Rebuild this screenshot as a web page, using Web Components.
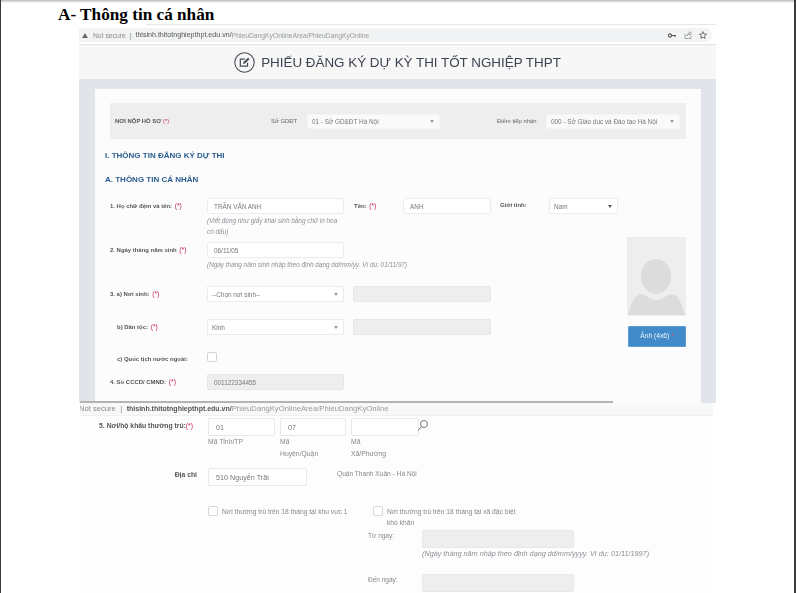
<!DOCTYPE html>
<html lang="vi">
<head>
<meta charset="utf-8">
<title>Thông tin cá nhân</title>
<style>
  html, body { margin: 0; padding: 0; background: #fff; }
</style>
</head>
<body>
<doc-page>
  <doc-title>A- Thông tin cá nhân</doc-title>

  <shot-one>
    <browser-bar></browser-bar>
    <form-header>PHIẾU ĐĂNG KÝ DỰ KỲ THI TỐT NGHIỆP THPT</form-header>
    <form-card>
      <submit-band></submit-band>
      <section-title style="margin-top:12px">I. THÔNG TIN ĐĂNG KÝ DỰ THI</section-title>
      <section-title style="margin-top:14px">A. THÔNG TIN CÁ NHÂN</section-title>

      <form-row label="1. Họ chữ đệm và tên:" required style="margin-top:13px;height:44px">
        <div>
          <text-box value="TRẦN VĂN ANH" width="137"></text-box>
          <hint-text style="width:135px">(Viết đúng như giấy khai sinh bằng chữ in hoa có dấu)</hint-text>
        </div>
        <field-label text="Tên:" required style="width:49px;margin-left:10px"></field-label>
        <text-box value="ANH" width="88"></text-box>
        <field-label text="Giới tính:" style="width:49px;margin-left:9px"></field-label>
        <select-box value="Nam" width="69" dark></select-box>
      </form-row>

      <personal-block>
        <form-row label="2. Ngày tháng năm sinh" required style="height:44px">
          <div>
            <text-box value="06/11/05" width="137"></text-box>
            <hint-text style="white-space:nowrap">(Ngày tháng năm sinh nhập theo định dạng dd/mm/yy. Ví dụ: 01/11/97)</hint-text>
          </div>
        </form-row>
        <form-row label="3. a) Nơi sinh:" required style="height:33px">
          <select-box value="--Chọn nơi sinh--" width="137"></select-box>
          <text-box width="138" disabled style="margin-left:9px"></text-box>
        </form-row>
        <form-row label="b) Dân tộc:" required indent style="height:33px">
          <select-box value="Kinh" width="137"></select-box>
          <text-box width="138" disabled style="margin-left:9px"></text-box>
        </form-row>
        <form-row label="c) Quốc tịch nước ngoài:" indent style="height:22px">
          <check-box></check-box>
        </form-row>
        <form-row label="4. Số CCCD/ CMND:" required>
          <text-box value="001122334455" width="137" disabled></text-box>
        </form-row>
        <photo-box slot="aside"></photo-box>
      </personal-block>
    </form-card>
  </shot-one>

  <shot-two>
    <browser-bar plain></browser-bar>
    <address-form></address-form>
  </shot-two>
</doc-page>

<script>
// Trang tài liệu gồm tiêu đề và hai ảnh chụp màn hình
class DocPage extends HTMLElement {
    constructor() {
        super();
        this.attachShadow({mode: 'open'});
    }
    connectedCallback() {
        this.shadowRoot.innerHTML = `
            <style>
                :host {
                    display: block;
                    position: relative;
                    width: 796px;
                    height: 593px;
                    overflow: hidden;
                    background: #fff;
                    box-sizing: border-box;
                    font-family: "Liberation Sans", Arial, sans-serif;
                }
                .shade {
                    position: absolute;
                    left: 0;
                    right: 0;
                    top: 0;
                    height: 3px;
                    background: linear-gradient(#b9b9b9, #fff);
                }
                .edge-l, .edge-r {
                    position: absolute;
                    top: 0;
                    bottom: 0;
                    background: #3a3a3a;
                }
                .edge-l { left: 0; width: 1px; }
                .edge-r { right: 0; width: 2px; }
            </style>
            <slot></slot>
            <div class="shade"></div>
            <div class="edge-l"></div>
            <div class="edge-r"></div>
        `;
    }
}
customElements.define('doc-page', DocPage);

class DocTitle extends HTMLElement {
    constructor() {
        super();
        this.attachShadow({mode: 'open'});
    }
    connectedCallback() {
        this.shadowRoot.innerHTML = `
            <style>
                :host {
                    display: block;
                    height: 24px;
                    padding-left: 58px;
                    box-sizing: border-box;
                    font: bold 17.2px/30px "Liberation Serif", "Times New Roman", serif;
                    color: #000;
                }
            </style>
            <slot></slot>
        `;
    }
}
customElements.define('doc-title', DocTitle);

class ShotOne extends HTMLElement {
    constructor() {
        super();
        this.attachShadow({mode: 'open'});
    }
    connectedCallback() {
        this.shadowRoot.innerHTML = `
            <style>
                :host {
                    display: block;
                    position: relative;
                    width: 637px;
                    height: 379px;
                    margin-left: 79px;
                    overflow: hidden;
                    background: #e1e5e9;
                    filter: blur(.4px);
                }
                /* thanh cuộn của ảnh chụp nằm đè lên phần đáy */
                .rule {
                    position: absolute;
                    left: 1px;
                    bottom: 0;
                    width: 533px;
                    height: 2px;
                    background: #b4b4b4;
                }
            </style>
            <slot></slot>
            <div class="rule"></div>
        `;
    }
}
customElements.define('shot-one', ShotOne);

class ShotTwo extends HTMLElement {
    constructor() {
        super();
        this.attachShadow({mode: 'open'});
    }
    connectedCallback() {
        this.shadowRoot.innerHTML = `
            <style>
                :host {
                    display: block;
                    width: 633px;
                    height: 190px;
                    margin-left: 80px;
                    overflow: hidden;
                    background: #fdfdfd;
                    filter: blur(.45px);
                }
            </style>
            <slot></slot>
        `;
    }
}
customElements.define('shot-two', ShotTwo);

class BrowserBar extends HTMLElement {
    constructor() {
        super();
        this.attachShadow({mode: 'open'});
    }
    connectedCallback() {
        const plain = this.hasAttribute('plain');
        const start = plain
            ? `<span class="grey cut">Not secure</span><span class="sep">|</span>`
            : `<svg width="6" height="5" viewBox="0 0 8 7"><path d="M4 0 8 7H0z" fill="#666"/></svg>
               <span class="grey" style="margin-left:2px">Not secure</span><span class="sep">|</span>`;
        const tools = plain ? '' : `
            <span class="tools">
                <svg width="8" height="5" viewBox="0 0 8 5"><circle cx="2" cy="2.5" r="1.6" fill="none" stroke="#555" stroke-width="1.1"/><path d="M3.5 2.5H8M6.8 2.5v1.6" stroke="#555"/></svg>
                <svg width="8" height="8" viewBox="0 0 8 8" fill="none" stroke="#888" stroke-width=".7"><path d="M1 3v4.500h6V5M3 5c0-2 1.500-3 3-3V.7L7.800 2.500 6 4.200V3C4.500 3 3.500 3.800 3 5z"/></svg>
                <svg width="8" height="8" viewBox="0 0 8 8"><path d="M4 .6 5 3l2.600.2-2 1.700.6 2.500L4 6.100 1.800 7.400l.6-2.500-2-1.700L3 3z" fill="none" stroke="#555" stroke-width=".8"/></svg>
            </span>`;
        this.shadowRoot.innerHTML = `
            <style>
                :host {
                    display: block;
                    box-sizing: border-box;
                    background: ${plain ? '#f7f8f8' : '#fff'};
                    height: ${plain ? '13px' : '21px'};
                    ${plain ? 'border-bottom: 1px solid #f0f0f0;' : 'border-bottom: 1px solid #e4e4e4;'}
                }
                .top {
                    height: 1px;
                    margin: 0 0 3px 67px;
                    background: #e3e7ea;
                }
                .line {
                    display: flex;
                    align-items: center;
                    gap: 3px;
                    height: ${plain ? '10px' : '14px'};
                    padding-left: ${plain ? '0' : '3px'};
                    padding-right: ${plain ? '0' : '5px'};
                    margin-right: ${plain ? '0' : '4px'};
                    border-radius: 0 7px 7px 0;
                    background: ${plain ? 'transparent' : '#f1f3f4'};
                    font-size: ${plain ? '7.6px' : '6.75px'};
                    white-space: nowrap;
                }
                .grey { color: #8a8a8a; }
                .cut { margin-left: -1px; }
                .sep { color: #888; margin: 0 ${plain ? '1.5px' : '1px'}; }
                .host { color: #555; font-weight: ${plain ? '700' : '400'}; font-size: ${plain ? '7px' : '7.1px'}; }
                .path { color: #9a9a9a; margin-left: -3px; font-size: ${plain ? '7.7px' : '6.75px'}; }
                .tools { margin-left: auto; display: flex; gap: 7.500px; align-items: center; }
            </style>
            ${plain ? '' : '<div class="top"></div>'}
            <div class="line">
                ${start}
                <span class="host">thisinh.thitotnghiepthpt.edu.vn/</span><span class="path">PhieuDangKyOnlineArea/PhieuDangKyOnline</span>
                ${tools}
            </div>
        `;
    }
}
customElements.define('browser-bar', BrowserBar);

class FormHeader extends HTMLElement {
    constructor() {
        super();
        this.attachShadow({mode: 'open'});
    }
    connectedCallback() {
        this.shadowRoot.innerHTML = `
            <style>
                :host {
                    display: flex;
                    align-items: center;
                    justify-content: center;
                    gap: 6px;
                    height: 34px;
                    background: #f7f7f8;
                    color: #3c4450;
                    font-size: 13.4px;
                    white-space: nowrap;
                }
            </style>
            <svg width="21" height="21" viewBox="0 0 21 21" fill="none" stroke="#474d55">
                <circle cx="10.500" cy="10.500" r="9.700" stroke-width="1.100"/>
                <path d="M13.500 10.800v3.400H6.300V7.200h4.600" stroke-width="1.200"/>
                <path d="M9 12l.5-2 4.500-4.200 1.500 1.500L11 11.500z" fill="#474d55" stroke="none"/>
            </svg>
            <slot></slot>
        `;
    }
}
customElements.define('form-header', FormHeader);

class FormCard extends HTMLElement {
    constructor() {
        super();
        this.attachShadow({mode: 'open'});
    }
    connectedCallback() {
        this.shadowRoot.innerHTML = `
            <style>
                :host {
                    display: block;
                    margin: 10px 15px 0 16px;
                    padding: 14px 15px 20px 15px;
                    background: #fcfcfc;
                    height: 330px;
                    box-sizing: border-box;
                }
            </style>
            <slot></slot>
        `;
    }
}
customElements.define('form-card', FormCard);

class SubmitBand extends HTMLElement {
    constructor() {
        super();
        this.attachShadow({mode: 'open'});
    }
    connectedCallback() {
        this.shadowRoot.innerHTML = `
            <style>
                :host {
                    display: grid;
                    grid-template-columns: 156px 36px 133px 57px 49px 134px;
                    align-items: center;
                    height: 36px;
                    padding-left: 5px;
                    background: #eeeeee;
                    font-size: 5.900px;
                    color: #666;
                }
                b { color: #555; font-weight: 700; }
                i { color: #c7254e; font-style: normal; }
                span { margin-top: -1px; }
                select-box { margin-top: 1px; }
            </style>
            <span><b>NƠI NỘP HỒ SƠ</b> <i>(*)</i></span>
            <span>Sở GDĐT</span>
            <select-box value="01 - Sở GD&amp;ĐT Hà Nội" width="133" soft></select-box>
            <span></span>
            <span>Điểm tiếp nhận</span>
            <select-box value="000 - Sở Giáo dục và Đào tạo Hà Nội" width="134" soft></select-box>
        `;
    }
}
customElements.define('submit-band', SubmitBand);

class SectionTitle extends HTMLElement {
    constructor() {
        super();
        this.attachShadow({mode: 'open'});
    }
    connectedCallback() {
        this.shadowRoot.innerHTML = `
            <style>
                :host {
                    display: block;
                    margin-left: -5px;
                    font-size: 8px;
                    line-height: 10px;
                    font-weight: 700;
                    color: #2a5d8f;
                }
            </style>
            <slot></slot>
        `;
    }
}
customElements.define('section-title', SectionTitle);

class FieldLabel extends HTMLElement {
    constructor() {
        super();
        this.attachShadow({mode: 'open'});
    }
    connectedCallback() {
        const text = this.getAttribute('text');
        const req = this.hasAttribute('required') ? ' <i>(*)</i>' : '';
        this.shadowRoot.innerHTML = `
            <style>
                :host {
                    display: block;
                    flex: none;
                    box-sizing: border-box;
                    padding-top: 3px;
                    font-size: 5.950px;
                    line-height: 9px;
                    font-weight: 700;
                    color: #555;
                    white-space: nowrap;
                }
                i { font-style: normal; font-weight: 400; font-size: 6.800px; margin-left: 1px; color: #c7254e; }
            </style>
            ${text}${req}
        `;
    }
}
customElements.define('field-label', FieldLabel);

class FormRow extends HTMLElement {
    constructor() {
        super();
        this.attachShadow({mode: 'open'});
    }
    connectedCallback() {
        const indent = this.hasAttribute('indent');
        const req = this.hasAttribute('required') ? 'required' : '';
        this.shadowRoot.innerHTML = `
            <style>
                :host {
                    display: flex;
                    align-items: flex-start;
                    box-sizing: border-box;
                }
                field-label {
                    width: 97px;
                    padding-left: ${indent ? '7px' : '0'};
                    box-sizing: border-box;
                }
            </style>
            <field-label text="${this.getAttribute('label')}" ${req}></field-label>
            <slot></slot>
        `;
    }
}
customElements.define('form-row', FormRow);

class TextBox extends HTMLElement {
    constructor() {
        super();
        this.attachShadow({mode: 'open'});
    }
    connectedCallback() {
        const width = this.getAttribute('width') || 137;
        const value = this.getAttribute('value') || '';
        const disabled = this.hasAttribute('disabled');
        this.shadowRoot.innerHTML = `
            <style>
                :host {
                    display: block;
                    flex: none;
                    box-sizing: border-box;
                    width: ${width}px;
                    height: 16px;
                    padding-left: 6px;
                    font-size: 6.400px;
                    line-height: 15px;
                    color: #777;
                    background: ${disabled ? '#eeeeee' : '#fff'};
                    border: 1px solid ${disabled ? '#e6e6e6' : '#ececec'};
                    border-radius: 2px;
                    white-space: nowrap;
                }
            </style>
            ${value}
        `;
    }
}
customElements.define('text-box', TextBox);

class SelectBox extends HTMLElement {
    constructor() {
        super();
        this.attachShadow({mode: 'open'});
    }
    connectedCallback() {
        const width = this.getAttribute('width') || 137;
        const dark = this.hasAttribute('dark');
        const soft = this.hasAttribute('soft');
        this.shadowRoot.innerHTML = `
            <style>
                :host {
                    display: flex;
                    align-items: center;
                    justify-content: space-between;
                    flex: none;
                    box-sizing: border-box;
                    width: ${width}px;
                    height: ${soft ? '15px' : '16px'};
                    padding: 0 5px 0 4px;
                    font-size: 6.400px;
                    color: #777;
                    font-weight: 400;
                    background: ${soft ? '#fafafa' : '#fff'};
                    border: 1px solid ${soft ? '#f4f4f4' : '#ececec'};
                    border-radius: 1px;
                    white-space: nowrap;
                }
                .arrow {
                    width: 0;
                    height: 0;
                    border-left: 2.500px solid transparent;
                    border-right: 2.500px solid transparent;
                    border-top: 3px solid ${dark ? '#555' : '#999'};
                }
            </style>
            <span>${this.getAttribute('value')}</span>
            <span class="arrow"></span>
        `;
    }
}
customElements.define('select-box', SelectBox);

class HintText extends HTMLElement {
    constructor() {
        super();
        this.attachShadow({mode: 'open'});
    }
    connectedCallback() {
        this.shadowRoot.innerHTML = `
            <style>
                :host {
                    display: block;
                    margin-top: 1px;
                    font-size: 6.400px;
                    line-height: 11px;
                    font-style: italic;
                    color: #8a8f96;
                }
            </style>
            <slot></slot>
        `;
    }
}
customElements.define('hint-text', HintText);

class CheckBox extends HTMLElement {
    constructor() {
        super();
        this.attachShadow({mode: 'open'});
    }
    connectedCallback() {
        this.shadowRoot.innerHTML = `
            <style>
                :host {
                    display: block;
                    flex: none;
                    box-sizing: border-box;
                    width: 10px;
                    height: 10px;
                    background: #fff;
                    border: 1px solid #d4d4d4;
                    border-radius: 2px;
                }
            </style>
        `;
    }
}
customElements.define('check-box', CheckBox);

// Khối có ảnh 4x6 nằm bên phải các dòng
class PersonalBlock extends HTMLElement {
    constructor() {
        super();
        this.attachShadow({mode: 'open'});
    }
    connectedCallback() {
        this.shadowRoot.innerHTML = `
            <style>
                :host {
                    display: flex;
                    justify-content: space-between;
                }
                .rows { flex: 1; }
                .side { flex: none; margin-top: -5px; }
            </style>
            <div class="rows"><slot></slot></div>
            <div class="side"><slot name="aside"></slot></div>
        `;
    }
}
customElements.define('personal-block', PersonalBlock);

class PhotoBox extends HTMLElement {
    constructor() {
        super();
        this.attachShadow({mode: 'open'});
    }
    connectedCallback() {
        this.shadowRoot.innerHTML = `
            <style>
                :host { display: block; width: 59px; }
                svg { display: block; }
                .btn {
                    margin: 10px 0 0 1px;
                    height: 21px;
                    box-sizing: border-box;
                    background: #428bca;
                    border: 1px solid #5a9bd4;
                    border-radius: 1px;
                    color: #eef5fb;
                    font-size: 6.700px;
                    line-height: 18px;
                    text-align: center;
                }
                i { font-style: normal; color: #d9534f; }
            </style>
            <svg width="59" height="79" viewBox="0 0 59 79">
                <rect width="59" height="79" fill="#eeeeee"/>
                <ellipse cx="29" cy="39.500" rx="15" ry="17.500" fill="#dcdcdc"/>
                <path d="M1 78C3 68 7 58 14 57c5 0 8 6 15 6S40 57 45 57c7 1 10 11 13 21z" fill="#dcdcdc"/>
            </svg>
            <div class="btn">Ảnh (4x6) <i>*</i></div>
        `;
    }
}
customElements.define('photo-box', PhotoBox);

// Phần dưới: nơi hộ khẩu thường trú
class AddressForm extends HTMLElement {
    constructor() {
        super();
        this.attachShadow({mode: 'open'});
    }
    connectedCallback() {
        this.shadowRoot.innerHTML = `
            <style>
                :host {
                    display: block;
                    padding-top: 2px;
                    font-size: 6.800px;
                    line-height: 12px;
                    color: #888;
                }
                .row { display: flex; align-items: flex-start; }
                .lbl {
                    flex: none;
                    width: 128px;
                    box-sizing: border-box;
                    font-weight: 700;
                    color: #555;
                    text-align: right;
                    padding-right: 14px;
                }
                .lbl i { font-style: normal; font-weight: 400; color: #c7254e; }
                .box {
                    box-sizing: border-box;
                    height: 18px;
                    background: #fff;
                    border: 1px solid #e8e8e8;
                    border-radius: 2px;
                    padding-left: 7px;
                    font-size: 7.200px;
                    line-height: 17px;
                    color: #777;
                    flex: none;
                }
                .off { background: #eeeeee; border-color: #e8e8e8; width: 152px; }
                .col { flex: none; }
                .cap { width: 60px; }
                .tick {
                    flex: none;
                    box-sizing: border-box;
                    width: 10px;
                    height: 10px;
                    background: #fff;
                    border: 1px solid #d8d8d8;
                    border-radius: 2px;
                    margin-right: 4px;
                }
                .note { font-size: 6.700px; line-height: 11px; }
                .when { width: 54px; flex: none; font-size: 6.500px; }
                .hint { font-style: italic; font-size: 7.250px; color: #8a8f96; line-height: 12px; margin-top: 0; white-space: nowrap; }
                svg { display: block; }
            </style>
            <div class="row" style="height:50px;">
                <div class="lbl" style="padding-top:2px;padding-right:15px;">5. Nơi/hộ khẩu thường trú:<i>(*)</i></div>
                <div class="col" style="margin-right:5px">
                    <div class="box" style="width:67px;">01</div>
                    <div class="cap">Mã Tỉnh/TP</div>
                </div>
                <div class="col" style="margin-right:5px">
                    <div class="box" style="width:66px;">07</div>
                    <div class="cap">Mã<br>Huyện/Quận</div>
                </div>
                <div class="col">
                    <div class="box" style="width:68px;"></div>
                    <div class="cap">Mã<br>Xã/Phường</div>
                </div>
                <svg width="11" height="11" viewBox="0 0 11 11" fill="none" stroke="#777" stroke-width="1" style="margin-top:2px;margin-left:-2px"><circle cx="7" cy="4" r="3.500"/><path d="M4.500 6.500 1 10.500"/></svg>
            </div>
            <div class="row" style="height:38px;">
                <div class="lbl" style="width:117px;padding-top:1px;padding-right:0;">Địa chỉ</div>
                <div class="box" style="width:99px;margin-left:11px;">510 Nguyễn Trãi</div>
                <div style="margin-left:30px;font-size:6.600px;">Quận Thanh Xuân - Hà Nội</div>
            </div>
            <div class="row" style="height:24px;padding-left:128px;">
                <span class="tick"></span><span class="note" style="width:151px;white-space:nowrap;">Nơi thường trú trên 18 tháng tại khu vực 1</span>
                <span class="tick"></span><span class="note" style="width:135px;">Nơi thường trú trên 18 tháng tại xã đặc biệt khó khăn</span>
            </div>
            <div class="row" style="height:44px;padding-left:288px;">
                <div class="when">Từ ngày:</div>
                <div>
                    <div class="box off"></div>
                    <div class="hint">(Ngày tháng năm nhập theo định dạng dd/mm/yyyy. Ví dụ: 01/11/1997)</div>
                </div>
            </div>
            <div class="row" style="padding-left:288px;">
                <div class="when">Đến ngày:</div>
                <div class="box off"></div>
            </div>
        `;
    }
}
customElements.define('address-form', AddressForm);
</script>
</body>
</html>
